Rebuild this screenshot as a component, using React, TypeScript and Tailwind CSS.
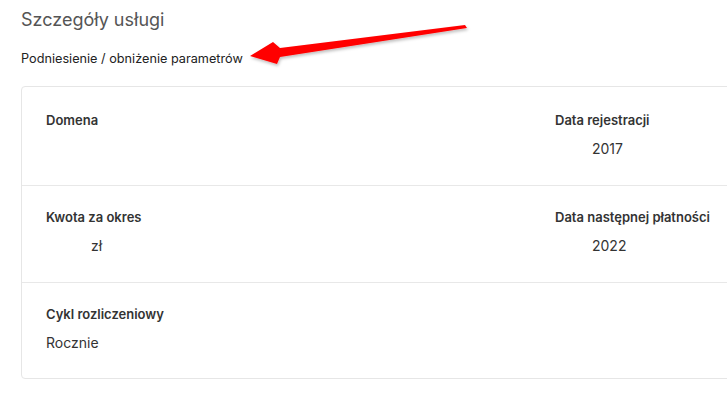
import React from "react";

const Arrow = () => (
  <svg
    className="absolute left-0 top-0 pointer-events-none"
    width="727"
    height="100"
    viewBox="0 0 727 100"
  >
    <defs>
      <filter id="sh" x="-10%" y="-50%" width="120%" height="200%">
        <feDropShadow dx="1" dy="2" stdDeviation="1.5" floodColor="#000" floodOpacity="0.25" />
      </filter>
    </defs>
    <polygon
      points="250,56 273,42 280,48 465,25 467,28 280,57 277,64"
      fill="#ff0000"
      filter="url(#sh)"
    />
  </svg>
);

const Field = ({
  label,
  value,
  indent,
}: {
  label: string;
  value?: string;
  indent?: string;
}) => (
  <div>
    <p className="text-[13px] leading-5 font-semibold text-[#333]">{label}</p>
    {value && (
      <p className={`mt-[9px] text-[14px] leading-5 text-[#333] ${indent ?? ""}`}>{value}</p>
    )}
  </div>
);

export default function App() {
  return (
    <div
      className="relative w-[727px] h-[403px] overflow-hidden bg-white"
      style={{ fontFamily: "Inter, 'Noto Sans', sans-serif" }}
    >
      <div className="pl-[21px] pt-[8px]">
        <h1 className="text-[18px] leading-6 text-[#555]">Szczegóły usługi</h1>
        <a className="block mt-[17px] text-[12.7px] leading-5 text-[#222]">
          Podniesienie / obniżenie parametrów
        </a>
        <div className="mt-[17px] w-[800px] border border-[#e6e6e6] rounded-[4px]">
          <div className="grid grid-cols-[509px_1fr] h-[99px] px-6 pt-[23px] border-b border-[#e8e8e8]">
            <Field label="Domena" />
            <Field label="Data rejestracji" value="2017" indent="ml-[37px]" />
          </div>
          <div className="grid grid-cols-[509px_1fr] h-[97px] px-6 pt-[21px] border-b border-[#e8e8e8]">
            <Field label="Kwota za okres" value="zł" indent="ml-[45px]" />
            <Field label="Data następnej płatności" value="2022" indent="ml-[37px]" />
          </div>
          <div className="h-[95px] px-6 pt-[21px]">
            <Field label="Cykl rozliczeniowy" value="Rocznie" />
          </div>
        </div>
      </div>
      <Arrow />
    </div>
  );
}
